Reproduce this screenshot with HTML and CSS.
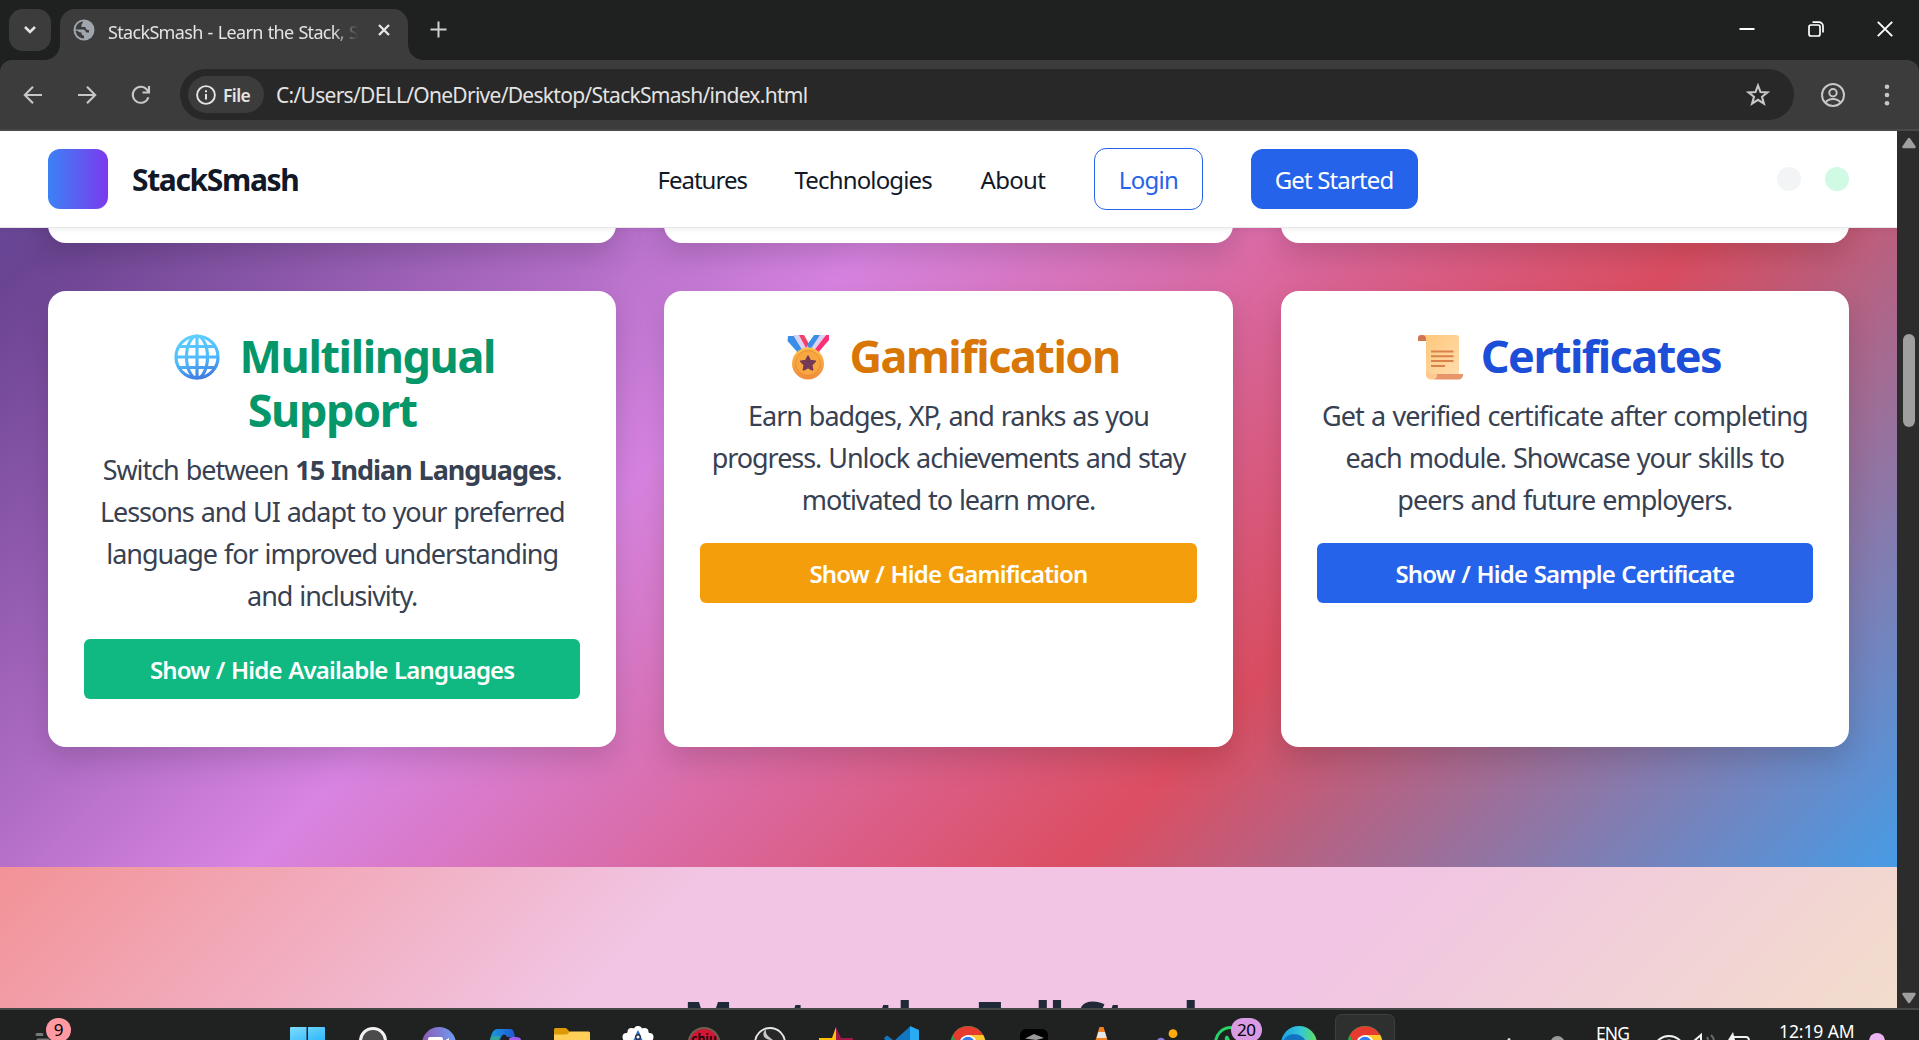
FILE: index.html
```html
<!DOCTYPE html>
<html lang="en">
<head>
<meta charset="utf-8">
<title>StackSmash - Learn the Stack, Smash the Code</title>
<link rel="stylesheet" href="styles.css">
</head>
<body>
<svg class="defs" width="0" height="0" aria-hidden="true">
  <defs>
    <linearGradient id="globe" gradientUnits="userSpaceOnUse" x1="20" y1="2" x2="30" y2="44"><stop offset="0" stop-color="#5fd0ff"/><stop offset=".6" stop-color="#4fb8fb"/><stop offset="1" stop-color="#3f7fe0"/></linearGradient>
    <linearGradient id="medal" x1="0" y1="0" x2="0" y2="1"><stop offset="0" stop-color="#fdc04a"/><stop offset="1" stop-color="#f08a3c"/></linearGradient>
    <linearGradient id="paper" x1="0" y1="0" x2="1" y2="1"><stop offset="0" stop-color="#ffc77a"/><stop offset="1" stop-color="#ffdcae"/></linearGradient>
    <linearGradient id="teams" x1="0" y1="0" x2="1" y2="0"><stop offset="0" stop-color="#8a5cb0"/><stop offset="1" stop-color="#6f9cf5"/></linearGradient>
    <linearGradient id="edge" x1="0" y1="0" x2="1" y2="0"><stop offset="0" stop-color="#1aa0e0"/><stop offset=".55" stop-color="#35c6d8"/><stop offset="1" stop-color="#62e05a"/></linearGradient>
    <linearGradient id="win" x1="0" y1="0" x2="1" y2="1"><stop offset="0" stop-color="#7ddcff"/><stop offset="1" stop-color="#2fb8fb"/></linearGradient>
    <linearGradient id="pilot" x1="0" y1="0" x2="1" y2="0"><stop offset="0" stop-color="#1b9ae0"/><stop offset="1" stop-color="#1f57d6"/></linearGradient>
    <g id="chrome">
      <circle cx="33" cy="33.5" r="17.5" fill="#2aa24c"/>
      <path d="M17.8 25A17.5 17.5 0 0 1 48.2 25H33z" fill="#e63b2e"/>
      <path d="M33 25H48.200A17.500 17.500 0 0 1 50.500 33.500H33z" fill="#fdc82f"/>
      <path d="M17.800 25H33V33.500H22z" fill="#e63b2e"/>
      <circle cx="33" cy="33.500" r="8.600" fill="#fff"/>
      <circle cx="33" cy="33.500" r="6.800" fill="#2f7df0"/>
    </g>
  </defs>
</svg>
<div class="window">
  <div class="tabstrip">
    <div class="tab-search"><svg width="14" height="10" viewBox="0 0 14 10"><path d="M2 2l5 5 5-5" fill="none" stroke="#e3e3e3" stroke-width="2.600"/></svg></div>
    <div class="tab">
      <svg class="favicon" width="22" height="22" viewBox="0 0 22 22"><circle cx="11" cy="11" r="10.500" fill="#a0a6ae"/><path d="M10 2.500C5 3 2.500 7 2.800 10.500H9.500C12.500 10.500 13 13 13 13.500H16V11C13 11 12.500 9.500 12.500 8H8.500V5.500C8.500 4.500 10 4.500 10 2.500zM2.600 11.500C3 16 6 19.300 11 19.500V16.500C8.500 16.500 8.500 14.500 8.500 13.500C5.500 13.500 5 11.500 2.600 11.500z" fill="#3c3c3c"/></svg>
      <span class="tab-title">StackSmash - Learn the Stack, Smash</span>
      <svg width="14" height="14" viewBox="0 0 14 14"><path d="M2 2l10 10M12 2L2 12" stroke="#e8e8e8" stroke-width="2.300"/></svg>
    </div>
    <svg class="new-tab" width="17" height="17" viewBox="0 0 17 17"><path d="M8.500 .5v16M.5 8.500h16" stroke="#d0d0d0" stroke-width="2"/></svg>
    <div class="window-controls">
      <svg width="16" height="16" viewBox="0 0 16 16"><path d="M.5 8h15" stroke="#fff" stroke-width="2"/></svg>
      <svg width="16" height="16" viewBox="0 0 16 16" fill="none" stroke="#fff" stroke-width="1.700"><rect x="1" y="4" width="11" height="11" rx="2"/><path d="M4.500 1.200H11a4 4 0 0 1 4 4V11.500"/></svg>
      <svg width="16" height="16" viewBox="0 0 16 16"><path d="M.8 .8l14.400 14.400M15.200 .8L.8 15.200" stroke="#fff" stroke-width="1.900"/></svg>
    </div>
  </div>
  <div class="toolbar">
    <svg class="nav-icon" width="20" height="20" viewBox="0 0 20 20"><path d="M19 10H2.500M10 1.800L1.800 10l8.200 8.200" fill="none" stroke="#c7c7c7" stroke-width="2.100"/></svg>
    <svg class="nav-icon" width="20" height="20" viewBox="0 0 20 20"><path d="M1 10h16.500M10 1.800l8.200 8.200-8.200 8.200" fill="none" stroke="#c7c7c7" stroke-width="2.100"/></svg>
    <svg class="nav-icon" width="20" height="20" viewBox="0 0 20 20"><path d="M17.400 12.200A8 8 0 1 1 15.800 4.500L18 7M18 1V7.500H11.500" fill="none" stroke="#c7c7c7" stroke-width="2.100"/></svg>
    <div class="address">
      <div class="chip"><svg width="20" height="20" viewBox="0 0 20 20"><circle cx="10" cy="10" r="8.900" fill="none" stroke="#e3e3e3" stroke-width="1.900"/><path d="M10 9v5.500M10 5.200v2" stroke="#e3e3e3" stroke-width="2"/></svg><span>File</span></div>
      <span class="url">C:/Users/DELL/OneDrive/Desktop/StackSmash/index.html</span>
      <svg width="24" height="24" viewBox="0 0 24 24"><path d="M12 2.500l2.500 6.600 7 .3-5.500 4.400 1.900 6.900L12 16.800l-5.900 3.900L8 13.800 2.500 9.400l7-.3z" fill="none" stroke="#c7c7c7" stroke-width="2.100"/></svg>
    </div>
    <svg class="profile" width="24" height="24" viewBox="0 0 24 24" fill="none" stroke="#c7c7c7" stroke-width="2"><circle cx="12" cy="12" r="11"/><circle cx="12" cy="9.700" r="3.700"/><path d="M4.500 19.500c2-2.600 5-3.400 7.500-3.400s5.500.8 7.500 3.400"/></svg>
    <svg class="menu" width="6" height="24" viewBox="0 0 6 24" fill="#c7c7c7"><circle cx="3" cy="3.700" r="2.300"/><circle cx="3" cy="12" r="2.300"/><circle cx="3" cy="20.300" r="2.300"/></svg>
  </div>
  <div class="view">
    <div class="page">
      <header class="site-header">
        <div class="brand"><div class="logo"></div><span class="brand-name">StackSmash</span></div>
        <nav class="links">
          <a class="l-features">Features</a><a class="l-tech">Technologies</a><a class="l-about">About</a>
          <a class="btn-login">Login</a><a class="btn-start">Get Started</a>
        </nav>
        <div class="dots"><i class="dot gray"></i><i class="dot green"></i></div>
      </header>
      <section class="features">
        <div class="cards previous"><div class="card"></div><div class="card"></div><div class="card"></div></div>
        <div class="cards">
          <article class="card">
            <h3 class="t-green"><svg class="emoji" width="62" height="46" viewBox="0 0 62 46"><g fill="none" stroke="url(#globe)" stroke-width="3.200"><circle cx="30" cy="23" r="21"/><ellipse cx="30" cy="23" rx="10.500" ry="21"/><path d="M30 2V44M9 23H51M12.500 12.500h35M12.500 33.500h35"/></g></svg> Multilingual<br>Support</h3>
            <p>Switch between <b>15 Indian Languages</b>.<br>Lessons and UI adapt to your preferred<br>language for improved understanding<br>and inclusivity.</p>
            <button class="b-green">Show / Hide Available Languages</button>
          </article>
          <article class="card">
            <h3 class="t-amber"><svg class="emoji" width="62" height="46" viewBox="2 0 62 46"><path d="M13 2h7l13 15-8 4L12.500 7z" fill="#3b8ee8"/><path d="M18 1h7l9 13-5 5z" fill="#dcd3f3"/><path d="M24 1h5l5 9-3 4z" fill="#f4406a"/><path d="M51 1h3v5L42 20l-6-3z" fill="#fb2f76"/><path d="M45 1h6L38 18l-5-3z" fill="#dcd3f3"/><path d="M39 1h6L35 16l-3-5z" fill="#3b8ee8"/><circle cx="33" cy="29.500" r="16" fill="url(#medal)"/><circle cx="33" cy="29" r="12.500" fill="#f8a740" stroke="#e98d35" stroke-width="1"/><path d="M33 22l2.300 4.600 5.100.7-3.700 3.600.9 5.100-4.600-2.400-4.600 2.400.9-5.100-3.700-3.600 5.100-.7z" fill="#743a55" stroke="#743a55" stroke-width="1.500" stroke-linejoin="round"/></svg> Gamification</h3>
            <p>Earn badges, XP, and ranks as you<br>progress. Unlock achievements and stay<br>motivated to learn more.</p>
            <button class="b-amber">Show / Hide Gamification</button>
          </article>
          <article class="card">
            <h3 class="t-blue"><svg class="emoji" width="62" height="46" viewBox="0 0 62 46"><path d="M9 6V4a3 3 0 0 1 3-3h6v6H9z" fill="#cf7550"/><path d="M13 1h34a3 3 0 0 1 3 3V42H22a5 5 0 0 1-5-5V5a4 4 0 0 0-4-4z" fill="url(#paper)"/><path d="M28 40H54v1a4.500 4.500 0 0 1-4.500 4.500H23C26 45.500 28 43 28 40z" fill="#e9956c"/><path d="M17 37V41a4.500 4.500 0 0 0 5 4.500c4 0 6-2.500 6-5.500H23z" fill="#ffc98c"/><path d="M22 17.500H44.500M22 22.300H44.500M22 27H44.500M22 32H36" stroke="#d9824c" stroke-width="1.900"/></svg> Certificates</h3>
            <p class="tight">Get a verified certificate after completing<br><span>each module. Showcase your skills to</span><br><span>peers and future employers.</span></p>
            <button class="b-blue">Show / Hide Sample Certificate</button>
          </article>
        </div>
      </section>
      <section class="stack"><h2>Master the Full Stack</h2></section>
    </div>
    <div class="scrollbar">
      <svg width="16" height="12" viewBox="0 0 16 12"><path d="M8 2l5.500 8h-11z" fill="#9f9f9f" stroke="#9f9f9f" stroke-width="2.500" stroke-linejoin="round"/></svg>
      <div class="thumb"></div>
      <svg class="down" width="16" height="12" viewBox="0 0 16 12"><path d="M8 10l5.500-8h-11z" fill="#9f9f9f" stroke="#9f9f9f" stroke-width="2.500" stroke-linejoin="round"/></svg>
    </div>
  </div>
</div>
<footer class="taskbar">
  <div class="widget"><svg width="40" height="30" viewBox="0 0 40 30"><path d="M3 24.500h5M4 30h10" stroke="#777" stroke-width="3" stroke-linecap="round"/></svg><span class="badge nine">9</span></div>
  <div class="apps">
    <svg viewBox="0 0 66 30"><path d="M16 18a1 1 0 0 1 1-1H32.500V30H16zM34 17H50a1 1 0 0 1 1 1V30H34z" fill="url(#win)"/></svg>
    <svg viewBox="0 0 66 30"><circle cx="33" cy="31" r="12.500" fill="#4b4b4b" stroke="#f2f2f2" stroke-width="3"/></svg>
    <svg viewBox="0 0 66 30"><circle cx="33" cy="34" r="17" fill="url(#teams)"/><rect x="22" y="27" width="15" height="8" rx="2" fill="#fff"/><path d="M38 31l5-3v4h-5z" fill="#fff"/></svg>
    <svg viewBox="0 0 66 30"><path d="M18 30c2-9 4-11 9-11h11c3 0 4 2 5 8h-8c-2-4-5-3-7 3z" fill="url(#pilot)"/><path d="M18 30c1-3 2-4 5-4h5l-1 4z" fill="#2fa79c"/><path d="M37 30c0-3 2-3 6-3 4 0 6 1 6 3z" fill="#a35cf0"/></svg>
    <svg viewBox="0 0 66 30"><path d="M15 19.500a1.500 1.500 0 0 1 1.500-1.500H27l4 4H49a2 2 0 0 1 2 2V30H15z" fill="#dc9a06"/><path d="M15 24.500h13l3-3H49.500A1.500 1.500 0 0 1 51 23V30H15z" fill="#ffcf57"/></svg>
    <svg viewBox="0 0 66 30"><g fill="#fff"><circle cx="33" cy="33" r="15"/><circle cx="33" cy="20" r="4"/><circle cx="26.500" cy="22" r="4"/><circle cx="39.500" cy="22" r="4"/><circle cx="21.500" cy="27" r="4"/><circle cx="44.500" cy="27" r="4"/></g><path d="M33 20l2 4-.5 2h-3l-.5-2zM30 27h6l1.500 3h-9z" fill="#2d6bc9"/><circle cx="33" cy="27" r="2.300" fill="#fff" stroke="#20304a" stroke-width="1.500"/></svg>
    <svg viewBox="0 0 66 30"><circle cx="33" cy="33.500" r="16.500" fill="#b99a7a" opacity=".5"/><circle cx="33" cy="33.500" r="14.500" fill="#d01634"/><text x="33" y="33" text-anchor="middle" class="chiu">chiu</text></svg>
    <svg viewBox="0 0 66 30"><circle cx="33" cy="33" r="15" fill="#282828" stroke="#e8e8e8" stroke-width="1.800"/><path d="M29 19c-6 6-1 11 7 11-4-3-8-5-7-11z" fill="#c9c9c9"/></svg>
    <svg viewBox="0 0 66 30"><path d="M33 17L29 28H16v2H33z" fill="#ffc107"/><path d="M33 17l5 11H50v2H33z" fill="#a01848"/></svg>
    <svg viewBox="0 0 66 30"><path d="M15 28l3-2.500 6 4.500h-8zM26 30L41 16.500V30z" fill="#1277c2"/><path d="M41 16l9 4v10H41z" fill="#2aaaf2"/></svg>
    <svg viewBox="0 0 66 30"><use href="#chrome"/></svg>
    <svg viewBox="0 0 66 30"><rect x="19" y="19" width="28" height="28" rx="6" fill="#000"/><path d="M24 28.500l9-4.500 10 4-8 2z" fill="#999"/></svg>
    <svg viewBox="0 0 66 30"><path d="M31.500 17h4l4 13h-12z" fill="#f08020"/><path d="M30.300 22h6.600l1.800 6h-10z" fill="#e6e6e6"/></svg>
    <svg viewBox="0 0 66 30"><circle cx="39" cy="23.700" r="4.400" fill="#ffae0c"/><circle cx="27" cy="32" r="4.300" fill="#8a78d8"/></svg>
    <div class="app"><svg viewBox="0 0 66 30"><circle cx="31" cy="33" r="15.500" fill="#1f2221" stroke="#25d366" stroke-width="3"/><path d="M25 30c-1-3 1-5 3-4l2 4z" fill="#25d366"/></svg><span class="badge twenty">20</span></div>
    <svg viewBox="0 0 66 30"><circle cx="33" cy="34" r="18" fill="url(#edge)"/><path d="M18 30c3-7 16-8 21 0z" fill="#1273c0"/></svg>
    <svg viewBox="0 0 66 30"><rect x="3.500" y="4.500" width="59" height="50" rx="6" fill="#2e2f2f" stroke="#3d3e3e"/><use href="#chrome"/></svg>
  </div>
  <div class="tray">
    <svg width="90" height="30" viewBox="0 0 90 30"><circle cx="8" cy="29.500" r="1.500" fill="#ddd"/><circle cx="56.500" cy="33" r="7" fill="#9a9a9a"/></svg>
    <span class="lang">ENG</span>
    <svg width="100" height="30" viewBox="0 0 100 30" fill="none" stroke="#f2f2f2" stroke-width="2"><path d="M4 30.500c6-6 16-6 22 0M11 32a6 6 0 0 1 8 0"/><path d="M40 31l7-6v6"/><path d="M53 27c1 1 1 3 1 4M57 25c2 2 3 4 3 6" stroke="#6b6b6b"/><path d="M80 27h12q3 0 3 4"/><path d="M79 22l-5 8h7z" fill="#f2f2f2" stroke="none"/></svg>
    <span class="clock">12:19 AM</span>
    <svg width="20" height="30" viewBox="0 0 20 30"><circle cx="10" cy="31" r="8" fill="#efb4f2"/></svg>
  </div>
</footer>
</body>
</html>
```
FILE: styles.css
```css
* { box-sizing: border-box; margin: 0; }
body {
  width: 1919px; height: 1040px; overflow: hidden;
  display: flex; flex-direction: column;
  background: #1f2120;
  font-family: "Noto Sans", "Open Sans", sans-serif;
}
.defs { position: absolute; }
svg { display: block; flex: none; }
.window { height: 1008px; display: flex; flex-direction: column; }

/* Browser chrome */
.tabstrip { height: 60px; display: flex; align-items: flex-start; padding: 9px 0 0 9px; background: #1f2120; }
.tab-search { width: 42px; height: 42px; border-radius: 14px; background: #3c3c3c; display: flex; align-items: center; justify-content: center; }
.tab {
  position: relative; width: 348px; height: 51px; margin-left: 9px; padding: 0 17px 9px 13px;
  display: flex; align-items: center; background: #3c3c3c; border-radius: 15px 15px 0 0;
}
.tab::before, .tab::after { content: ""; position: absolute; bottom: 0; width: 15px; height: 15px; }
.tab::before { left: -15px; background: radial-gradient(circle at 0 0, transparent 14.5px, #3c3c3c 15px); }
.tab::after { right: -15px; background: radial-gradient(circle at 100% 0, transparent 14.5px, #3c3c3c 15px); }
.tab-title {
  width: 252px; margin: 3px 17px 0 13px; overflow: hidden; white-space: nowrap;
  font-size: 18px; line-height: 26px; letter-spacing: -0.67px; word-spacing: 1px; color: #e3e3e3;
  -webkit-mask-image: linear-gradient(90deg, #000 225px, transparent 250px);
  mask-image: linear-gradient(90deg, #000 225px, transparent 250px);
}
.tab-title + svg { margin-left: auto; }
.new-tab { margin: 12px 0 0 22px; }
.window-controls { display: flex; gap: 53px; margin: 12px 26px 0 auto; }
.toolbar {
  height: 71px; padding: 9px 29px 9px 23px; display: flex; align-items: center;
  background: #3c3c3c; border-bottom: 2px solid #494949; border-radius: 12px 12px 0 0;
}
.nav-icon { margin-right: 34px; }
.nav-icon:nth-child(3) { margin-right: 29px; }
.address {
  width: 1614px; height: 51px; border-radius: 26px; background: #282828;
  display: flex; align-items: center; padding: 0 24px 0 8px;
}
.chip {
  width: 76px; height: 37px; border-radius: 19px; background: #3c3c3c; color: #e3e3e3;
  display: flex; align-items: center; padding-left: 8px; gap: 7px;
  font-size: 17.500px; font-weight: 600; letter-spacing: -0.6px;
}
.url { flex: 1; margin-left: 12px; font-size: 21px; line-height: 30px; letter-spacing: -0.72px; color: #e3e3e3; }
.profile { margin-left: 27px; }
.menu { margin-left: 39px; }

/* Page viewport */
.view { flex: 1; display: flex; min-height: 0; }
.page { width: 1897px; display: flex; flex-direction: column; overflow: hidden; }
.scrollbar { width: 22px; background: #2c2c2c; display: flex; flex-direction: column; align-items: center; padding: 6px 0 4px 1px; }
.thumb { width: 12px; height: 93px; margin-top: 185px; border-radius: 6px; background: #9f9f9f; }
.scrollbar .down { margin-top: auto; }

.site-header {
  position: relative; z-index: 1; flex: none; height: 97px; padding: 0 48px; background: #fff;
  border-bottom: 1px solid #e5e7eb; box-shadow: 0 2px 5px rgba(0, 0, 0, .06);
  display: flex; align-items: center; justify-content: space-between;
}
.brand { display: flex; align-items: center; gap: 24px; }
.logo { width: 60px; height: 60px; border-radius: 12px; background: linear-gradient(90deg, #3b82f6, #7c3aed); }
.brand-name { width: 166px; padding-top: 1px; font-size: 30px; line-height: 45px; font-weight: 700; letter-spacing: -1.35px; color: #111827; white-space: nowrap; }
.links { display: flex; align-items: center; gap: 48px; font-size: 24px; line-height: 36px; letter-spacing: -0.85px; color: #111827; white-space: nowrap; }
.l-features, .l-tech, .l-about { padding-top: 2px; }
.l-features { width: 89px; letter-spacing: -1px; }
.l-tech { width: 137px; }
.l-about { width: 66px; letter-spacing: -0.7px; text-indent: 1px; }
.btn-login, .btn-start { text-align: center; border-radius: 12px; }
.btn-login { width: 109px; height: 62px; line-height: 62px; border: 1px solid #2563eb; color: #2563eb; letter-spacing: -0.7px; text-indent: 1px; }
.btn-start { width: 167px; height: 60px; line-height: 62px; background: #2563eb; color: #fff; }
.dots { display: flex; gap: 24px; }
.dot { width: 24px; height: 24px; border-radius: 50%; }
.gray { background: #f3f4f6; }
.green { background: #d1fae5; }

.features {
  flex: none; height: 639px; padding: 0 48px; overflow: hidden;
  display: flex; flex-direction: column; gap: 48px;
  background: linear-gradient(135deg, #5c6dd3 0%, #6a4492 25%, #d884e2 50%, #dc4e61 75%, #479be5 100%) bottom / 1897px 1399px no-repeat;
}
.cards { display: grid; grid-template-columns: repeat(3, 1fr); gap: 48px; height: 456px; }
.previous { height: 115px; margin-top: -100px; }
.card {
  padding: 36px; border-radius: 18px; background: #fff; text-align: center;
  box-shadow: 0 12px 30px rgba(0, 0, 0, .15);
}
h3 { padding-top: 2px; font-size: 45px; line-height: 54px; margin-bottom: -2px; font-weight: 700; letter-spacing: -1.4px; }
.emoji { display: inline-block; vertical-align: -7px; }
.t-green .emoji { margin-left: -2px; }
.t-green { color: #059669; }
.t-amber { color: #d97706; letter-spacing: -1.5px; }
.t-blue { color: #1d4ed8; letter-spacing: -1.55px; }
.card p { padding-top: 14px; margin-bottom: 22px; font-size: 27px; line-height: 42px; letter-spacing: -1.05px; word-spacing: 1px; color: #374151; white-space: nowrap; }
.card p.tight { letter-spacing: -0.9px; }
.tight span { letter-spacing: -1px; }
.card button {
  display: block; width: 100%; height: 60px; border: 0; border-radius: 6px; color: #fff;
  font: 600 24px/60px "Noto Sans", sans-serif; letter-spacing: -0.82px; word-spacing: 1px; padding: 1px 0 0;
}
.b-green { background: #10b981; }
.b-amber { background: #f59e0b; }
.b-blue { background: #2563eb; }

.stack {
  flex: none; height: 936px; padding-top: 120px;
  background: linear-gradient(135deg, #f29296 0%, #f1c5e3 25%, #f1c5e3 50%, #f2e0c8 75%, #e6d5be 100%);
}
h2 { font-size: 54px; line-height: 66px; font-weight: 700; letter-spacing: -2px; word-spacing: 2px; text-align: center; color: #1f2937; }

/* Desktop taskbar */
.taskbar { height: 32px; border-top: 2px solid #444746; background: #202121; display: flex; overflow: hidden; }
.widget { position: relative; width: 274px; padding-left: 34px; }
.badge { position: absolute; height: 24px; border-radius: 12px; color: #000; text-align: center; line-height: 24px; }
.nine { left: 46px; top: 8px; width: 25px; font-size: 17px; background: #ff9aa2; }
.twenty { left: 31px; top: 8px; width: 31px; font-size: 17px; background: #d99be4; letter-spacing: -0.5px; }
.apps { display: flex; width: 1124px; justify-content: space-between; }
.apps svg { width: 66px; height: 30px; }
.app { position: relative; }
.chiu { font: 700 12px "Noto Sans", sans-serif; fill: #16050a; }
.tray { display: flex; margin-left: 103px; color: #fff; font-size: 17.500px; white-space: nowrap; }
.lang { width: 34px; margin: 10px 0 0 5px; line-height: 26px; letter-spacing: -0.9px; }
.tray .lang + svg { margin-left: 24px; }
.clock { width: 80px; margin: 8px 0 0 25px; line-height: 26px; letter-spacing: -0.1px; }
.tray .clock + svg { margin-left: 8px; }
```
